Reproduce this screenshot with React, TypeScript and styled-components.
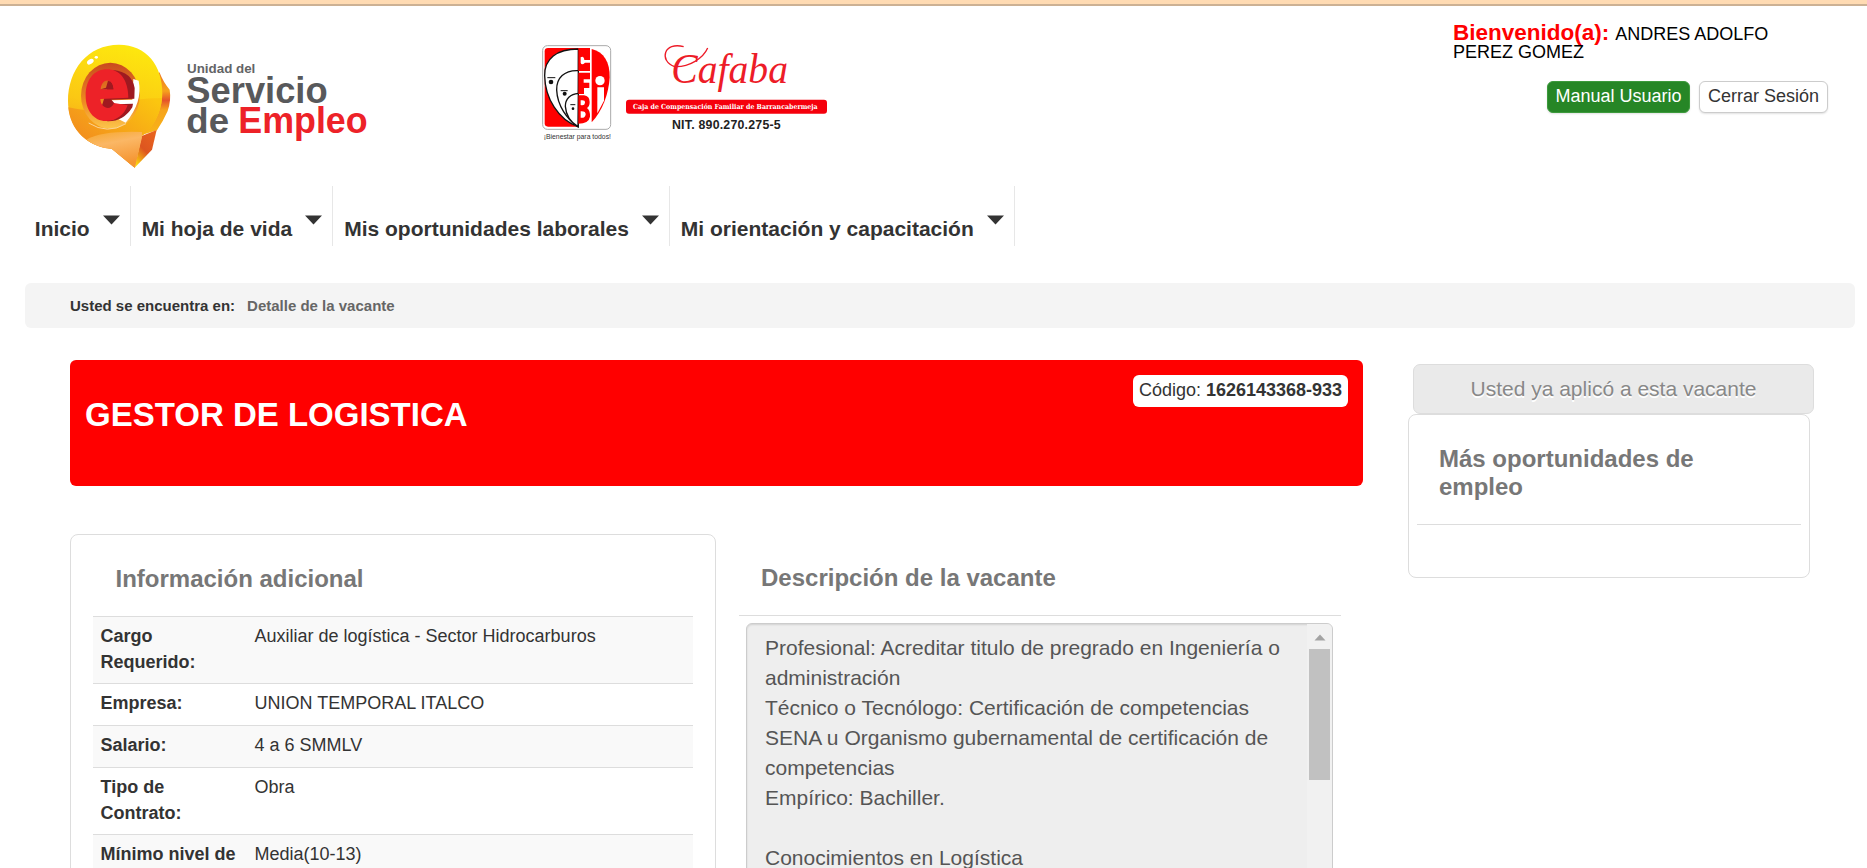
import React from 'react';
import styled, { createGlobalStyle, css } from 'styled-components';

const GlobalStyle = createGlobalStyle`
  *, *::before, *::after { box-sizing: border-box; }
  html, body { margin: 0; padding: 0; background: #fff; }
  body {
    font-family: "Liberation Sans", Arial, Helvetica, sans-serif;
    font-size: 18px;
    color: #333;
    overflow: hidden;
  }
`;

const Page = styled.div`
  height: 868px;
  overflow: hidden;
  background: #fff;
`;

const TopStrip = styled.div`
  height: 6px;
  background: #ffdbb3;
  border-bottom: 2px solid #ccb194;
`;

const Header = styled.header`
  display: flex;
  height: 180px;
  padding-left: 50px;
`;

const ServiceLogo = styled.svg`
  flex: none;
  width: 340px;
  height: 150px;
  margin: 24px 140px 0 0;
`;

const CafabaLogo = styled.svg`
  flex: none;
  width: 320px;
  height: 125px;
  margin-top: 24px;
`;

const UserArea = styled.div`
  width: 375px;
  margin-left: auto;
  margin-right: 39px;
  padding-top: 18px;
`;

const Welcome = styled.p`
  margin: 0 0 19px;
  height: 38px;
  font-size: 18px;
  line-height: 18px;
  color: #000;
`;

const WelcomeLabel = styled.strong`
  margin-right: 2px;
  font-size: 22.5px;
  color: #f00;
`;

const UserActions = styled.div`
  display: flex;
  justify-content: flex-end;
  gap: 9px;
`;

const SmallButton = styled.button<{ $primary?: boolean }>`
  height: 32px;
  padding: 0 8px 2px;
  border: 1px solid #ccc;
  border-radius: 6px;
  background: #fff;
  color: #333;
  font: 18px/28px "Liberation Sans", Arial, sans-serif;
  white-space: nowrap;
  box-shadow: 0 1px 2px rgba(0, 0, 0, 0.12);
  ${(p) =>
    p.$primary &&
    css`
      padding: 0 7.5px 2px;
      border-color: #3c9a3c;
      background: #268626;
      color: #fff;
    `}
`;

const Nav = styled.nav`
  display: flex;
  height: 60px;
  padding-left: 24px;
`;

const NavItem = styled.a`
  display: flex;
  align-items: flex-start;
  gap: 13px;
  padding: 28px 10.2px 0 10.8px;
  border-right: 1px solid #e7e7e7;
  font-size: 21px;
  font-weight: bold;
  line-height: 30px;
  white-space: nowrap;
`;

const Caret = styled.svg`
  width: 17px;
  height: 10px;
  margin-top: 1px;
`;

const Breadcrumb = styled.div`
  display: flex;
  gap: 12px;
  height: 45px;
  width: 1830px;
  margin: 37px 0 0 25px;
  padding-left: 45px;
  border-radius: 6px;
  background: #f4f4f4;
  font-size: 15px;
  font-weight: bold;
  line-height: 45px;
`;

const Crumb = styled.span`
  color: #666;
`;

const Main = styled.main`
  display: flex;
  gap: 45px;
  padding: 32px 0 0 70px;
`;

const Content = styled.section`
  width: 1293px;
`;

const Banner = styled.div`
  display: flex;
  justify-content: space-between;
  align-items: flex-start;
  height: 126px;
  padding: 15px 15px 0;
  border-radius: 6px;
  background: #f00;
`;

const BannerTitle = styled.h1`
  margin: 23px 0 0;
  color: #fff;
  font-size: 33px;
  line-height: 33px;
`;

const CodeLabel = styled.span`
  height: 32px;
  width: 215px;
  border-radius: 6px;
  background: #fff;
  text-align: center;
  font-size: 18px;
  line-height: 30px;
  white-space: nowrap;
`;

const Columns = styled.div`
  display: flex;
  align-items: flex-start;
  gap: 23px;
  margin-top: 48px;
`;

const InfoCard = styled.section`
  width: 646px;
  height: 500px;
  padding: 30px 22px 0;
  border: 1px solid #ddd;
  border-radius: 8px;
`;

const Heading = styled.h2<{ $indent: number }>`
  margin: 0;
  padding: 0 0 23px ${(p) => p.$indent}px;
  color: #777;
  font-size: 24px;
  line-height: 28px;
`;

const InfoRow = styled.div<{ $striped: boolean }>`
  display: grid;
  grid-template-columns: 154px 1fr;
  padding: 7px 0 8px;
  border-top: 1px solid #ddd;
  background: ${(p) => (p.$striped ? '#f9f9f9' : '#fff')};
  line-height: 25.7px;
`;

const InfoLabel = styled.strong`
  padding: 0 7.5px;
`;

const InfoValue = styled.span`
  padding: 0 7.5px;
`;

const Description = styled.section`
  width: 602px;
  padding-top: 30px;
`;

const DescriptionBody = styled.div`
  padding: 7px 8px 0 7px;
  border-top: 1px solid #ddd;
`;

const TextBox = styled.div`
  display: flex;
  height: 400px;
  border: 1px solid #ccc;
  border-radius: 6px;
  background: #eee;
  box-shadow: inset 0 1px 2px rgba(0, 0, 0, 0.12);
  overflow: hidden;
`;

const TextContent = styled.div`
  flex: 1;
  padding: 9px 0 0 18px;
  color: #555;
  font-size: 21px;
  line-height: 30px;
  white-space: pre;
`;

const ScrollTrack = styled.div`
  display: flex;
  flex-direction: column;
  align-items: center;
  width: 25px;
  background: #f1f1f1;
`;

const ScrollArrow = styled.svg`
  width: 12px;
  height: 7px;
  margin: 10px 0 8px;
`;

const ScrollThumb = styled.div`
  width: 21px;
  height: 131px;
  background: #c1c1c1;
`;

const Sidebar = styled.aside`
  width: 406px;
  padding-top: 4px;
`;

const AppliedButton = styled.div`
  width: 401px;
  height: 50px;
  margin-left: 5px;
  border: 1px solid #ddd;
  border-radius: 7px;
  background: #eaeaea;
  color: #888;
  font-size: 21px;
  line-height: 48px;
  text-align: center;
  text-shadow: 0 1.5px 0 #fff;
`;

const MoreCard = styled.div`
  width: 402px;
  height: 164px;
  padding: 30px 8px 0;
  border: 1px solid #ddd;
  border-radius: 8px;
`;

const MoreHeading = styled(Heading)`
  border-bottom: 1px solid #ddd;
  padding-right: 80px;
`;

const navItems = ['Inicio', 'Mi hoja de vida', 'Mis oportunidades laborales', 'Mi orientación y capacitación'];

const info: [string, string][] = [
  ['Cargo Requerido:', 'Auxiliar de logística - Sector Hidrocarburos'],
  ['Empresa:', 'UNION TEMPORAL ITALCO'],
  ['Salario:', '4 a 6 SMMLV'],
  ['Tipo de Contrato:', 'Obra'],
  ['Mínimo nivel de', 'Media(10-13)'],
];

const description = `Profesional: Acreditar titulo de pregrado en Ingeniería o
administración
Técnico o Tecnólogo: Certificación de competencias
SENA u Organismo gubernamental de certificación de
competencias
Empírico: Bachiller.

Conocimientos en Logística`;

function EmpleoLogo() {
  return (
    <ServiceLogo viewBox="0 0 1020 450" fontFamily="Liberation Sans, Arial, sans-serif" fontWeight="bold">
      <defs>
        <linearGradient id="bubble" x1="0.55" y1="0" x2="0.35" y2="1">
          <stop offset="0" stopColor="#fde70e" />
          <stop offset="0.5" stopColor="#fbc814" />
          <stop offset="1" stopColor="#f28a20" />
        </linearGradient>
        <linearGradient id="lower" x1="0.9" y1="0" x2="0.1" y2="0.8">
          <stop offset="0" stopColor="#fbc60f" />
          <stop offset="1" stopColor="#f18420" />
        </linearGradient>
        <linearGradient id="side" x1="0" y1="0" x2="0" y2="1">
          <stop offset="0" stopColor="#ee7023" />
          <stop offset="0.3" stopColor="#f6a31c" />
          <stop offset="0.45" stopColor="#e5532a" />
          <stop offset="0.6" stopColor="#f6a31c" />
          <stop offset="1" stopColor="#f8b517" />
        </linearGradient>
        <linearGradient id="tip" x1="0" y1="0" x2="0.3" y2="1">
          <stop offset="0" stopColor="#f6a72a" />
          <stop offset="0.4" stopColor="#fbb765" />
          <stop offset="1" stopColor="#f59531" />
        </linearGradient>
        <linearGradient id="fold" x1="0.8" y1="0" x2="0.2" y2="1">
          <stop offset="0" stopColor="#e8641f" />
          <stop offset="0.55" stopColor="#dd5520" />
          <stop offset="1" stopColor="#fbd90e" />
        </linearGradient>
        <linearGradient id="ring" x1="0" y1="0" x2="0" y2="1">
          <stop offset="0" stopColor="#c9491f" />
          <stop offset="0.6" stopColor="#ee8b22" />
          <stop offset="1" stopColor="#fcc54b" />
        </linearGradient>
      </defs>
      <path d="M328 126 Q340 157 359 179 Q364 210 353 243 Q338 276 321 301 L275 315 Z" fill="url(#side)" />
      <path d="M275 318 L320 300 L306 359 L254 413 Z" fill="url(#fold)" />
      <path d="M207 44 C290 44 338 108 337 190 C336 248 308 296 275 318 L254 413 L185 356 C103 352 54 285 54 213 C54 120 112 44 207 44 Z" fill="url(#bubble)" />
      <path d="M55 232 C128 250 184 239 225 219 C258 206 300 205 336 204 C333 250 307 298 275 318 L254 413 L185 356 C110 350 60 298 55 232 Z" fill="url(#lower)" />
      <path d="M109 329 Q155 302 276 306 L275 326 L254 413 L185 356 Q143 354 109 329 Z" fill="url(#tip)" />
      <ellipse cx="181" cy="197" rx="88" ry="99" fill="url(#ring)" />
      <path d="M250 147 L266 152 Q279 216 227 278 L205 267 L182 236 L185 211 L247 209 Z" fill="#fff" />
      <path d="M190 120 Q246 126 254 174 L253 206 L184 209 L196 223 L249 221 L247 232 Q220 275 173 274 L143 266 Z" fill="#9f1920" />
      <path
        d="M171 118 C210 118 235 150 235 203 L151 207 C152 233 181 246 192 219 L233 226 C222 256 199 273 168 273 C131 273 107 240 107 197 C107 149 132 118 171 118 Z M152 178 L190 178 C188 143 155 143 152 178 Z"
        fill="#ed2228"
        fillRule="evenodd"
      />
      <path d="M152 178 L190 178 Q189 156 174 152 L168 173 Z" fill="#9f1920" />
      <path d="M116 279 Q172 315 228 281" fill="none" stroke="#fbd497" strokeWidth="3" />
      <ellipse cx="121" cy="95" rx="11" ry="7" fill="#fff" transform="rotate(-35 121 95)" />
      <ellipse cx="139" cy="82" rx="5" ry="4" fill="#fff" />
      <text x="411" y="128" fontSize="40" textLength="205" lengthAdjust="spacingAndGlyphs" fill="#636466">Unidad del</text>
      <text x="409" y="220" fontSize="111" textLength="424" lengthAdjust="spacingAndGlyphs" fill="#58595b">Servicio</text>
      <text x="409" y="309" fontSize="107" textLength="128" lengthAdjust="spacingAndGlyphs" fill="#58595b">de</text>
      <text x="565" y="309" fontSize="111" textLength="388" lengthAdjust="spacingAndGlyphs" fill="#ed2228">Empleo</text>
    </ServiceLogo>
  );
}

function CompanyLogo() {
  return (
    <CafabaLogo viewBox="0 0 960 375">
      <rect x="38" y="47" width="204" height="251" rx="14" fill="#fff" stroke="#aaa" strokeWidth="3" />
      <path d="M54 54 H145 V290 H54 Q44 290 44 280 V64 Q44 54 54 54 Z" fill="#f00" />
      <g fill="#fff" stroke="#111" strokeWidth="4">
        <path d="M145 57 C80 57 43 86 44 137 C45 205 86 270 144 290 Z" />
        <path d="M145 122 C103 120 79 144 80 180 C82 228 112 268 144 290 Z" />
        <path d="M145 190 C121 192 106 207 106 229 C108 256 124 278 144 290 Z" />
      </g>
      <path d="M52 143 H76 M92 182 H113 M121 224 H136" stroke="#111" strokeWidth="3" />
      <circle cx="63" cy="156" r="7" fill="#111" />
      <circle cx="104" cy="191" r="6" fill="#111" />
      <circle cx="129" cy="236" r="4" fill="#111" />
      <path d="M145 54 H180 V90 H163 Q161 76 152 82 V98 Q155 108 165 98 H180 V123 H145 Z" fill="#f00" />
      <path d="M145 128 H180 V148 H161 V158 H178 V174 H162 V192 H145 Z" fill="#f00" />
      <path d="M145 196 H162 Q179 198 179 216 Q179 229 171 234 Q181 242 180 260 Q176 281 145 281 Z" fill="#f00" />
      <path d="M152 211 Q166 209 165 218 Q164 228 152 225 Z M152 244 Q168 243 167 254 Q163 266 152 263 Z" fill="#fff" />
      <path d="M185 57 C222 65 240 98 239 142 C237 190 216 246 185 277 Z" fill="#f00" />
      <circle cx="210" cy="152" r="14" fill="#fff" />
      <path d="M202 172 H222 V212 L202 250 Z" fill="#fff" />
      <text x="41" y="327" fontSize="21" fontFamily="Liberation Sans, Arial, sans-serif" textLength="202" lengthAdjust="spacingAndGlyphs" fill="#333">¡Bienestar para todos!</text>
      <path d="M434 110 C385 92 402 34 461 50 M434 110 C478 112 520 84 533 54" fill="none" stroke="#ed1c28" strokeWidth="4" />
      <text x="424" y="160" fontSize="126" fontStyle="italic" fontFamily="Liberation Serif, Times New Roman, serif" textLength="350" lengthAdjust="spacingAndGlyphs" fill="#ed1c28">Cafaba</text>
      <rect x="288" y="209" width="603" height="42" rx="9" fill="#f5000c" />
      <text x="309" y="237" fontSize="21" fontWeight="bold" fontFamily="DejaVu Serif, serif" textLength="554" lengthAdjust="spacingAndGlyphs" fill="#fff">Caja de Compensación Familiar de Barrancabermeja</text>
      <text x="426" y="297" fontSize="37" fontWeight="bold" fontFamily="Liberation Sans, Arial, sans-serif" textLength="326" fill="#222">NIT. 890.270.275-5</text>
    </CafabaLogo>
  );
}

export default function App() {
  return (
    <Page>
      <GlobalStyle />
      <TopStrip />
      <Header>
        <EmpleoLogo />
        <CompanyLogo />
        <UserArea>
          <Welcome>
            <WelcomeLabel>Bienvenido(a):</WelcomeLabel> ANDRES ADOLFO
            <br />
            PEREZ GOMEZ
          </Welcome>
          <UserActions>
            <SmallButton $primary>Manual Usuario</SmallButton>
            <SmallButton>Cerrar Sesión</SmallButton>
          </UserActions>
        </UserArea>
      </Header>
      <Nav>
        {navItems.map((label) => (
          <NavItem key={label}>
            {label}
            <Caret viewBox="0 0 17 10">
              <path d="M0 0.5 H17 L8.5 9.5 Z" fill="#333" />
            </Caret>
          </NavItem>
        ))}
      </Nav>
      <Breadcrumb>
        <span>Usted se encuentra en:</span>
        <Crumb>Detalle de la vacante</Crumb>
      </Breadcrumb>
      <Main>
        <Content>
          <Banner>
            <BannerTitle>GESTOR DE LOGISTICA</BannerTitle>
            <CodeLabel>
              Código: <strong>1626143368-933</strong>
            </CodeLabel>
          </Banner>
          <Columns>
            <InfoCard>
              <Heading $indent={22.5}>Información adicional</Heading>
              {info.map(([label, value], i) => (
                <InfoRow key={label} $striped={i % 2 === 0}>
                  <InfoLabel>{label}</InfoLabel>
                  <InfoValue>{value}</InfoValue>
                </InfoRow>
              ))}
            </InfoCard>
            <Description>
              <Heading $indent={22}>Descripción de la vacante</Heading>
              <DescriptionBody>
                <TextBox>
                  <TextContent>{description}</TextContent>
                  <ScrollTrack>
                    <ScrollArrow viewBox="0 0 12 7">
                      <path d="M0.5 6.5 L6 0.5 L11.5 6.5 Z" fill="#a3a3a3" />
                    </ScrollArrow>
                    <ScrollThumb />
                  </ScrollTrack>
                </TextBox>
              </DescriptionBody>
            </Description>
          </Columns>
        </Content>
        <Sidebar>
          <AppliedButton>Usted ya aplicó a esta vacante</AppliedButton>
          <MoreCard>
            <MoreHeading $indent={22}>Más oportunidades de empleo</MoreHeading>
          </MoreCard>
        </Sidebar>
      </Main>
    </Page>
  );
}
